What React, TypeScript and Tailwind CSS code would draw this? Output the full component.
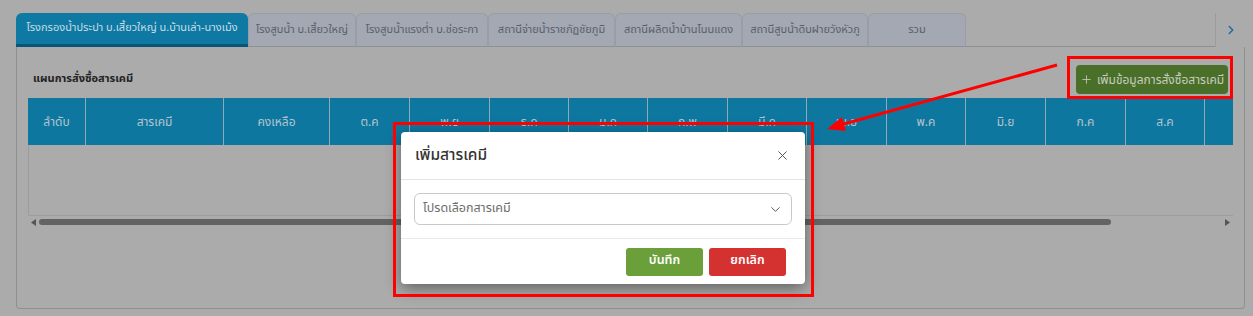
import { X, ChevronDown, ChevronRight, Plus } from "lucide-react";

const tabs = [
  { label: "โรงกรองน้ำประปา บ.เสี้ยวใหญ่ น.บ้านเล่า-นางเม้ง", w: "w-[232px]", active: true },
  { label: "โรงสูบน้ำ บ.เสี้ยวใหญ่", w: "w-[108px]" },
  { label: "โรงสูบน้ำแรงต่ำ บ.ช่อระกา", w: "w-[132px]" },
  { label: "สถานีจ่ายน้ำราชภัฏชัยภูมิ", w: "w-[127px]" },
  { label: "สถานีผลิตน้ำบ้านโนนแดง", w: "w-[127px]" },
  { label: "สถานีสูบน้ำดิบฝายวังหัวภู", w: "w-[126px]" },
  { label: "รวม", w: "w-[98px]" },
];

const columns = [
  { label: "ลำดับ", w: "w-[58px]" },
  { label: "สารเคมี", w: "w-[138px]" },
  { label: "คงเหลือ", w: "w-[106px]" },
  { label: "ต.ค", w: "w-[80px]" },
  { label: "พ.ย", w: "w-[80px]" },
  { label: "ธ.ค", w: "w-[79px]" },
  { label: "ม.ค", w: "w-[79px]" },
  { label: "ก.พ", w: "w-[80px]" },
  { label: "มี.ค", w: "w-[79px]" },
  { label: "เม.ย", w: "w-[80px]" },
  { label: "พ.ค", w: "w-[79px]" },
  { label: "มิ.ย", w: "w-[80px]" },
  { label: "ก.ค", w: "w-[80px]" },
  { label: "ส.ค", w: "w-[79px]" },
  { label: "", w: "w-[80px]" },
];

export default function App() {
  return (
    <div className="relative w-[1253px] h-[316px] overflow-hidden bg-[#ababab] font-['Noto_Sans_Thai','Noto_Sans',sans-serif]">
      <div className="pl-[16px] pt-[13px] pr-[8px]">
        {/* tabs */}
        <div className="flex h-[34px] items-stretch">
          {tabs.map((t) =>
            t.active ? (
              <div
                key={t.label}
                className={`${t.w} shrink-0 rounded-t-[6px] bg-[#0e7aa4] border-b-[3px] border-[#0a5478] flex items-center justify-center text-[11px] text-[#c9dbe4] whitespace-nowrap`}
              >
                {t.label}
              </div>
            ) : (
              <div
                key={t.label}
                className={`${t.w} shrink-0 rounded-t-[6px] bg-[#a3a8b3] border border-[#999da6] border-b-[#8f9095] flex items-center justify-center text-[11px] text-[#5a5f6b] whitespace-nowrap`}
              >
                {t.label}
              </div>
            )
          )}
          <div className="flex-1 border-b border-[#8f8f8f]" />
          <div className="w-[30px] border-l border-[#9c9c9c] flex items-center justify-center">
            <ChevronRight size={14} strokeWidth={2.5} className="text-[#1d6a9c]" />
          </div>
        </div>

        {/* panel */}
        <div className="w-[1229px] h-[262px] border border-t-0 border-[#8f8f8f] rounded-b-[4px] px-[11px] pt-[14px]">
          <div className="flex items-center justify-between h-[37px]">
            <span className="pl-[5px] text-[11px] font-bold text-[#222]">แผนการสั่งซื้อสารเคมี</span>
            <div className="mr-[5px] w-[152px] h-[29px] rounded-[4px] bg-[#4a6f29] flex items-center justify-center gap-[4px] text-[12px] text-[#c6cec0]">
              <Plus size={13} strokeWidth={1.5} />
              <span>เพิ่มข้อมูลการสั่งซื้อสารเคมี</span>
            </div>
          </div>

          {/* table */}
          <div className="w-[1205px] overflow-hidden">
            <div className="flex h-[47px] bg-[#0e77a0] w-max">
              {columns.map((c, i) => (
                <div
                  key={i}
                  className={`${c.w} shrink-0 border-r border-[#8fa9b6] flex items-center justify-center text-[12px] text-[#b4c4cc]`}
                >
                  {c.label}
                </div>
              ))}
            </div>
            <div className="h-[71px] border-l border-b border-[#9d9d9d]" />
            <div className="flex items-center h-[12px] gap-[3px] px-[3px]">
              <svg width="5" height="7" viewBox="0 0 5 7">
                <path d="M5 0 L0 3.5 L5 7 Z" fill="#555" />
              </svg>
              <div className="h-[6px] w-[1072px] rounded-full bg-[#636363]" />
              <div className="flex-1" />
              <svg width="5" height="7" viewBox="0 0 5 7">
                <path d="M0 0 L5 3.5 L0 7 Z" fill="#555" />
              </svg>
            </div>
          </div>
        </div>
      </div>

      {/* modal */}
      <div className="absolute left-[401px] top-[132px] w-[404px] h-[152px] bg-white rounded-[4px] shadow-[0_4px_16px_rgba(0,0,0,0.45)] flex flex-col">
        <div className="h-[48px] border-b border-[#e3e3e3] flex items-center justify-between px-[14px]">
          <span className="text-[15.5px] font-medium text-[#333]">เพิ่มสารเคมี</span>
          <X size={15} strokeWidth={1.6} className="text-[#555] mr-[1px]" />
        </div>
        <div className="h-[59px] px-[13px] pt-[13px] border-b border-[#e9e9e9]">
          <div className="h-[32px] rounded-[6px] border border-[#c9c9c9] flex items-center justify-between px-[8px]">
            <span className="text-[12.5px] text-[#6d6d6d]">โปรดเลือกสารเคมี</span>
            <ChevronDown size={15} strokeWidth={1.6} className="text-[#555]" />
          </div>
        </div>
        <div className="flex-1 flex items-center justify-end gap-[6px] pr-[19px]">
          <div className="w-[77px] h-[28px] rounded-[3px] bg-[#6a9f3a] flex items-center justify-center text-[12.5px] font-semibold text-white">
            บันทึก
          </div>
          <div className="w-[77px] h-[28px] rounded-[3px] bg-[#d43131] flex items-center justify-center text-[12.5px] font-semibold text-white">
            ยกเลิก
          </div>
        </div>
      </div>

      {/* annotations */}
      <svg className="absolute inset-0 pointer-events-none" width="1253" height="316">
        <rect x="1068.5" y="57.5" width="163" height="40" fill="none" stroke="#ff0000" strokeWidth="3" />
        <rect x="394.5" y="123.5" width="418" height="172" fill="none" stroke="#ff0000" strokeWidth="3" />
        <line x1="1057" y1="65" x2="840" y2="125" stroke="#ff0000" strokeWidth="3" />
        <path d="M827 129 L842 117 L846 131 Z" fill="#ff0000" />
      </svg>
    </div>
  );
}
